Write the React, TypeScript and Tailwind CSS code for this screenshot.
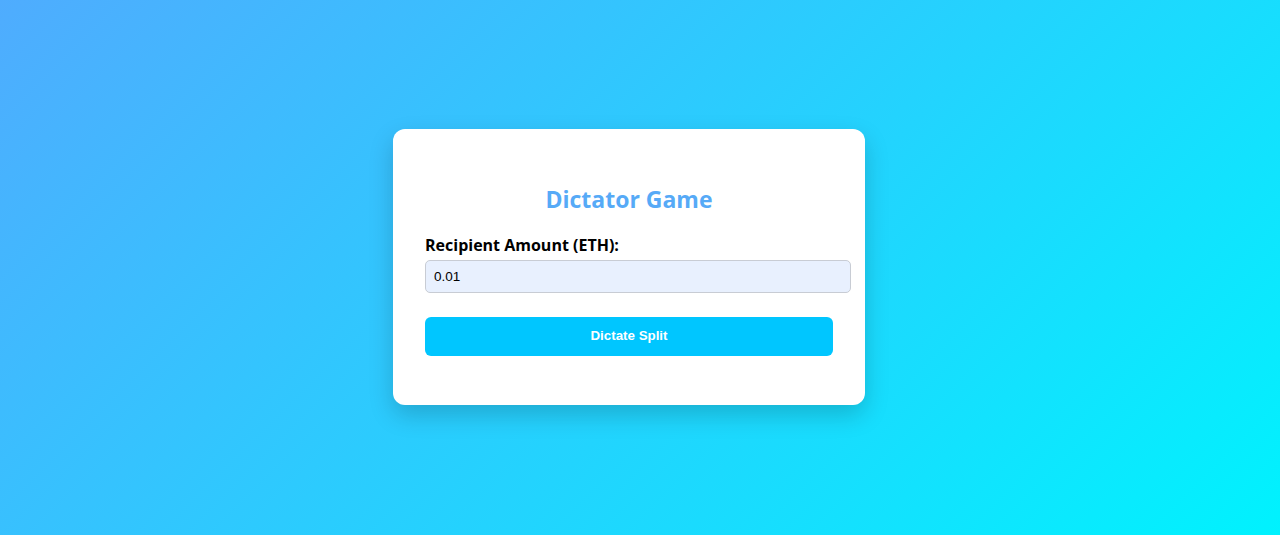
import React from "react";

export default function App() {
  return (
    <div className="min-h-screen w-full flex items-center justify-center pr-[22px] bg-[linear-gradient(135deg,#4facfe_0%,#00f2fe_100%)]">
      <div className="w-[472px] rounded-xl bg-white px-8 pt-[54px] pb-[49px] shadow-[0_10px_25px_rgba(0,0,0,0.18)] mb-[2px]">
        <h2 className="text-center text-[23px] leading-[32px] font-bold text-[#56aaf7] mb-5 font-['Open_Sans',sans-serif]">
          Dictator Game
        </h2>
        <label className="block text-[16px] leading-[21px] font-bold text-black mb-[4px] font-['Open_Sans',sans-serif]">
          Recipient Amount (ETH):
        </label>
        <input
          type="text"
          defaultValue="0.01"
          className="block w-[426px] h-[33px] px-2 rounded-[5px] border border-[#c8ccd4] bg-[#e8f0fe] text-[13.5px] text-black font-['Liberation_Sans',Arial,sans-serif] outline-none"
        />
        <button className="mt-[24px] w-full h-[39px] rounded-md bg-[#00c6ff] text-white text-[13.33px] font-bold font-['Liberation_Sans',Arial,sans-serif]">
          Dictate Split
        </button>
      </div>
    </div>
  );
}
